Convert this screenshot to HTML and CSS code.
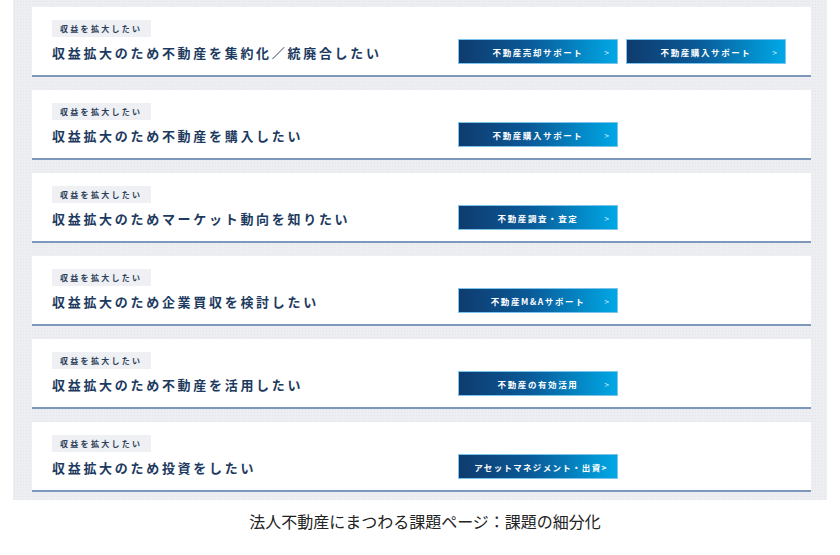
FILE: index.html
```html
<!DOCTYPE html>
<html lang="ja">
    <head>
        <meta charset="utf-8">
        <title>法人不動産にまつわる課題ページ</title>
        <link rel="stylesheet" href="styles.css">
    </head>

    <body>
        <div class="figure">
            <div class="panel">

                <div class="card">
                    <div class="text">
                        <span class="tag">収益を拡大したい</span>
                        <p class="title">収益拡大のため不動産を集約化／統廃合したい</p>
                    </div>
                    <div class="buttons">
                        <a class="btn"><span class="label">不動産売却サポート</span><span class="arrow">&gt;</span></a>
                        <a class="btn"><span class="label">不動産購入サポート</span><span class="arrow">&gt;</span></a>
                    </div>
                </div>

                <div class="card">
                    <div class="text">
                        <span class="tag">収益を拡大したい</span>
                        <p class="title">収益拡大のため不動産を購入したい</p>
                    </div>
                    <div class="buttons">
                        <a class="btn"><span class="label">不動産購入サポート</span><span class="arrow">&gt;</span></a>
                    </div>
                </div>

                <div class="card">
                    <div class="text">
                        <span class="tag">収益を拡大したい</span>
                        <p class="title">収益拡大のためマーケット動向を知りたい</p>
                    </div>
                    <div class="buttons">
                        <a class="btn"><span class="label">不動産調査・査定</span><span class="arrow">&gt;</span></a>
                    </div>
                </div>

                <div class="card">
                    <div class="text">
                        <span class="tag">収益を拡大したい</span>
                        <p class="title">収益拡大のため企業買収を検討したい</p>
                    </div>
                    <div class="buttons">
                        <a class="btn"><span class="label">不動産M&amp;Aサポート</span><span class="arrow">&gt;</span></a>
                    </div>
                </div>

                <div class="card">
                    <div class="text">
                        <span class="tag">収益を拡大したい</span>
                        <p class="title">収益拡大のため不動産を活用したい</p>
                    </div>
                    <div class="buttons">
                        <a class="btn"><span class="label">不動産の有効活用</span><span class="arrow">&gt;</span></a>
                    </div>
                </div>

                <div class="card">
                    <div class="text">
                        <span class="tag">収益を拡大したい</span>
                        <p class="title">収益拡大のため投資をしたい</p>
                    </div>
                    <div class="buttons">
                        <a class="btn btn-long"><span class="label">アセットマネジメント・出資&gt;</span></a>
                    </div>
                </div>

            </div>
            <p class="caption">法人不動産にまつわる課題ページ：課題の細分化</p>
        </div>
    </body>
</html>
```

FILE: styles.css
```css
html{
    height:100%;
}
body{
    margin:0;
    background-color:#ffffff;
    font-family:"Noto Sans CJK JP", "Noto Sans", sans-serif;
}
.figure{
    padding:0 13px;
}
.panel{
    background-color:#eceef1;
    background-image:radial-gradient(#e2e4e8 1px, transparent 1px);
    background-size:3px 3px;
    padding:7px 16px 8px 19px;
    display:flex;
    flex-direction:column;
    gap:13px;
}
.card{
    height:70px;
    box-sizing:border-box;
    background-color:#ffffff;
    border-bottom:2px solid #7d98bb;
    padding:13px 0 0 20px;
    display:flex;
}
.text{
    width:406px;
    display:flex;
    flex-direction:column;
    align-items:flex-start;
}
.tag{
    height:17px;
    line-height:17px;
    padding:0 9px 0 8px;
    background-color:#eef0f4;
    color:#2c3e58;
    font-size:8px;
    font-weight:700;
    letter-spacing:2.3px;
}
.title{
    margin:6px 0 0 0;
    line-height:20px;
    font-size:13px;
    font-weight:700;
    letter-spacing:2.7px;
    color:#1d3a60;
    white-space:nowrap;
}
.buttons{
    margin-top:19px;
    display:flex;
    gap:8px;
}
.btn{
    width:160px;
    height:25px;
    box-sizing:border-box;
    display:flex;
    align-items:center;
    padding:0 8px 0 18px;
    background:linear-gradient(to right, #0f3b6e 0%, #0a5a98 45%, #00a8e6 100%);
    border:1px solid #7cc4ec;
    color:#ffffff;
    font-size:8.5px;
    font-weight:700;
    letter-spacing:1.6px;
    cursor:pointer;
}
.btn .label{
    flex:1;
    text-align:center;
    white-space:nowrap;
}
.btn .arrow{
    width:10px;
    text-align:right;
    font-weight:400;
    letter-spacing:0;
    color:#cfeafa;
}
.btn-long{
    padding:0 4px 0 10px;
    letter-spacing:1.3px;
}
.caption{
    margin:10px 0 0 0;
    padding-left:10px;
    text-align:center;
    font-size:16px;
    line-height:22px;
    color:#222222;
}
```
